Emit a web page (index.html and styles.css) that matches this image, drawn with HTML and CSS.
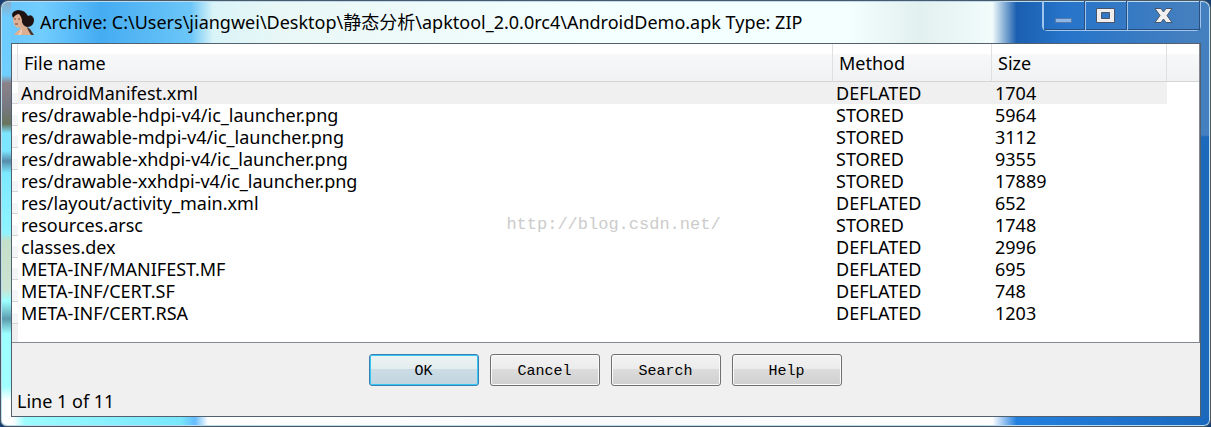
FILE: index.html
```html
<!DOCTYPE html>
<html lang="zh-CN">
<head>
<meta charset="utf-8">
<title>Archive</title>
<link rel="stylesheet" href="styles.css">
</head>
<body>
<div class="window">
  <header class="titlebar">
    <svg class="app-icon" viewBox="0 0 24 25" aria-hidden="true">
      <path d="M3 25 Q6 21 9 19 L9 14 L16 13 L16 17 Q20 19 21 25Z" fill="#dcae92"/>
      <path d="M2 6 Q4 3 8 3 L13 7 Q14 13 11 16 Q8 19 5 17 Q3 15 2 11Z" fill="#e0b094"/>
      <path d="M1 5 Q1 1 7 0 Q14 0 17 6 Q20 4 22 7 Q24 10 22 14 Q20 17 16 17 Q12 16 11 12 Q11 7 8 4 Q5 4 2 8Z" fill="#1f1413"/>
      <path d="M16 17 L19 19 L23 25 L20 25 L17 20Z" fill="#4a322b"/>
      <path d="M3 9h2M7 9h2M4 14h3" stroke="#744637" fill="none"/>
      <path d="M10 18 Q12 21 10 25 L7 25 Q10 21 10 18" fill="#f0cbb4"/>
    </svg>
    <h1 class="title">Archive: C:\Users\jiangwei\Desktop\静态分析\apktool_2.0.0rc4\AndroidDemo.apk Type: ZIP</h1>
    <div class="controls">
      <button class="control" type="button" aria-label="Minimize"><svg width="19" height="19" viewBox="0 0 19 19"><rect x="1.500" y="12.500" width="16" height="4" fill="#8db5e4" stroke="#557cae"/></svg></button>
      <button class="control" type="button" aria-label="Maximize"><svg width="21" height="19" viewBox="0 0 21 19"><path d="M1.500 2.500h18v14h-18z M6.500 6.500v6h8v-6z" fill="#eee" fill-rule="evenodd" stroke="#4b5567"/></svg></button>
      <button class="control close" type="button" aria-label="Close"><svg width="19" height="19" viewBox="0 0 19 19"><path d="M1 2.500h6l2.500 3.500 2.500-3.500h6L13 9.500l5 7h-6l-2.500-3.500-2.500 3.500h-6l5-7z" fill="#f0f0f0" stroke="#4b5567"/></svg></button>
    </div>
  </header>
  <main class="content">
    <section class="list">
      <table class="files">
        <colgroup><col class="col-mark"><col><col class="col-method"><col class="col-size"><col class="col-rest"></colgroup>
        <thead><tr><th></th><th scope="col">File name</th><th scope="col">Method</th><th scope="col">Size</th><th></th></tr></thead>
        <tbody>
          <tr class="selected"><td></td><td>AndroidManifest.xml</td><td>DEFLATED</td><td>1704</td><td></td></tr>
          <tr><td></td><td>res/drawable-hdpi-v4/ic_launcher.png</td><td>STORED</td><td>5964</td><td></td></tr>
          <tr><td></td><td>res/drawable-mdpi-v4/ic_launcher.png</td><td>STORED</td><td>3112</td><td></td></tr>
          <tr><td></td><td>res/drawable-xhdpi-v4/ic_launcher.png</td><td>STORED</td><td>9355</td><td></td></tr>
          <tr><td></td><td>res/drawable-xxhdpi-v4/ic_launcher.png</td><td>STORED</td><td>17889</td><td></td></tr>
          <tr><td></td><td>res/layout/activity_main.xml</td><td>DEFLATED</td><td>652</td><td></td></tr>
          <tr><td></td><td>resources.arsc</td><td>STORED</td><td>1748</td><td></td></tr>
          <tr><td></td><td>classes.dex</td><td>DEFLATED</td><td>2996</td><td></td></tr>
          <tr><td></td><td>META-INF/MANIFEST.MF</td><td>DEFLATED</td><td>695</td><td></td></tr>
          <tr><td></td><td>META-INF/CERT.SF</td><td>DEFLATED</td><td>748</td><td></td></tr>
          <tr><td></td><td>META-INF/CERT.RSA</td><td>DEFLATED</td><td>1203</td><td></td></tr>
        </tbody>
      </table>
      <span class="watermark">http://blog.csdn.net/</span>
    </section>
    <div class="actions">
      <button class="action default" type="button">OK</button>
      <button class="action" type="button">Cancel</button>
      <button class="action" type="button">Search</button>
      <button class="action" type="button">Help</button>
    </div>
    <footer class="status">Line 1 of 11</footer>
  </main>
</div>
</body>
</html>
```
FILE: styles.css
```css
* { box-sizing: border-box; }
body {
  margin: 0;
  background: #173f73;
  color: #000;
  font: 18px/22px "Noto Sans", "Noto Sans CJK SC", sans-serif;
}
.window {
  display: flex;
  flex-direction: column;
  min-height: 100vh;
  padding: 0 9px 9px 10px;
  border: 1px solid #4c5964;
  border-radius: 8px 8px 7px 7px;
  box-shadow: inset 0 0 0 1px #b9dcf1;
  background:
    linear-gradient(90deg, #fff 0, #fff 12px, #9cfcff 24px, #78e6fc 180px, #66bdff 194px, #fff 207px, #f8fafb 50%, #fff 82%, #2480df 84%, #1968bd 100%) bottom / 100% 9px no-repeat,
    linear-gradient(#8fa9bd 0, #6ccbff 16px, #6fcfff 74px, #8b8289 82px, #777982 105px, #68745d 123px, #7ce5ff 132px, #7ce5ff 150px, #568ba9 160px, #7ce9ff 172px, #8ff4ff 232px, #c4dfc9 240px, #cbe3d2 288px, #9cffff 300px, #5c9dae 318px, #9cffff 333px, #a0ffff 385px, #fff 400px) left / 10px 100% no-repeat,
    linear-gradient(#447fbf 0, #447fbf 134px, #1d69bc 136px, #1d69bc 100%) right / 9px 100% no-repeat,
    linear-gradient(90deg, #68c5fb 0, #73ceff 40px, #45acf2 100px, #6cc6f8 190px, #d9f4f8 212px, #e9f7f6 280px, #f4ffff 50%, #f4ffff 70%, #e2f0ef 76%, #f1fcfb 82%, #1b5fb0 84%, #2674ca 88%, #447fbf 98%);
}
.titlebar {
  display: flex;
  align-items: flex-start;
  height: 42px;
}
.app-icon { flex: none; width: 24px; height: 25px; margin-top: 9px; }
.title {
  flex: 1;
  min-width: 0;
  margin: 0 0 0 5px;
  overflow: hidden;
  font-size: 18px;
  font-weight: 400;
  line-height: 42px;
  white-space: nowrap;
}
.controls {
  display: flex;
  flex: none;
  border: 1px solid #9fc5ec;
  border-top: 0;
  border-radius: 0 0 5px 5px;
}
.control {
  display: flex;
  align-items: center;
  justify-content: center;
  width: 42px;
  height: 29px;
  padding: 0;
  border: 0;
  border-right: 1px solid #284f80;
  box-shadow: inset 1px 0 #9fc5ec, inset 0 -1px #284f80;
  background: none;
}
.control.close { width: 73px; }
.content {
  display: flex;
  flex: 1;
  flex-direction: column;
  border: 1px solid #53606d;
  background: #f0f0f0;
}
.list {
  position: relative;
  flex: 1;
  border: 1px solid #828790;
  border-width: 0 1px 1px 0;
  background: linear-gradient(90deg, #f0f0f0 6px, #fff 6px);
}
.files { width: 100%; border-collapse: separate; border-spacing: 0; table-layout: fixed; }
.col-mark { width: 6px; }
.col-method { width: 159px; }
.col-size { width: 175px; }
.col-rest { width: 32px; }
th {
  height: 38px;
  padding: 0 6px;
  border-right: 1px solid #dfe0e2;
  border-bottom: 1px solid #d5d5d5;
  background: linear-gradient(#fff 10px, #f7f8fa 10px, #f1f2f4 36px);
  font-weight: 400;
  text-align: left;
}
th:first-child, td:first-child { padding: 0; }
th:last-child { border-right: 0; }
td { height: 22px; padding: 0 3px; white-space: nowrap; }
td:first-child { border-bottom: 1px solid #d5d5d5; background: linear-gradient(#fff 50%, #f4f5f7 50%); }
.selected td:not(:first-child):not(:last-child) { background: #f0f0f0; }
.watermark {
  position: absolute;
  top: 170px;
  left: 50%;
  color: #ccc;
  font: 17px/22px "Liberation Mono", monospace;
  transform: translateX(-50%);
  margin-left: 8px;
}
.actions { display: flex; justify-content: center; gap: 11px; padding: 11px 2px 4px 0; }
.action {
  width: 110px;
  height: 32px;
  padding: 3px 0 0;
  border: 1px solid #707070;
  border-radius: 3px;
  box-shadow: inset 0 0 0 1px #fafafa;
  background: linear-gradient(#f3f3f3, #ebebeb 48%, #dcdcdc 48%, #cfcfcf);
  color: #000;
  font: 15px/22px "Liberation Mono", monospace;
}
.action.default {
  border-color: #3c7fb1;
  box-shadow: inset 0 0 0 1px #35c8f5;
  background: linear-gradient(#edf3f3, #e2eded 48%, #cbdce5 48%, #c1d5df);
}
.status { padding: 0 5px 4px; }
```
